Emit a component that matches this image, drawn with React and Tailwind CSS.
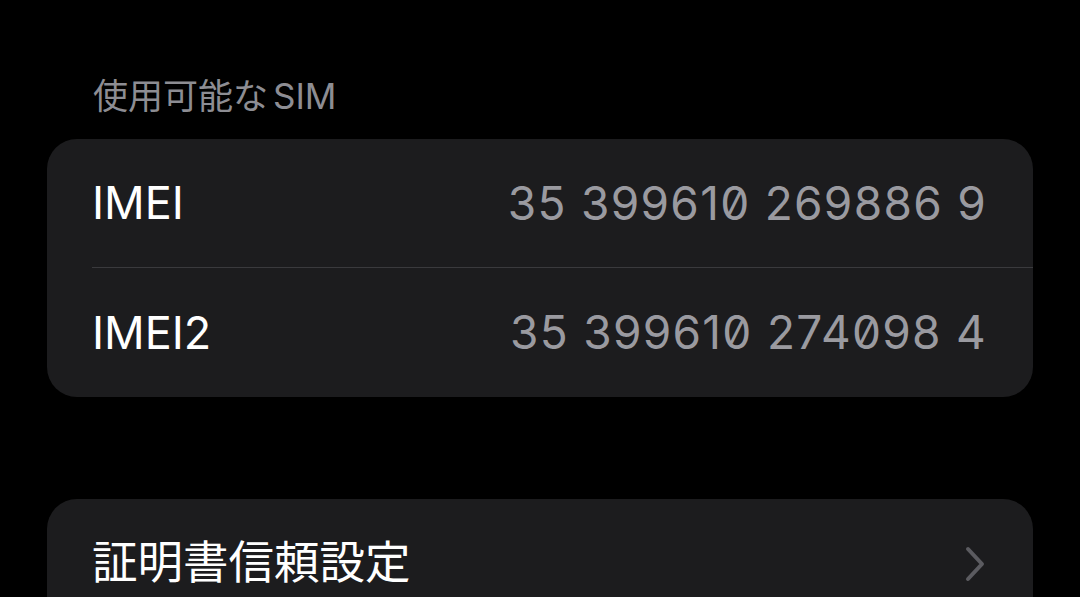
import React from "react";

const font = { fontFamily: '"Inter", "Noto Sans CJK JP", sans-serif' };

const Chevron = () => (
  <svg width="24" height="38" viewBox="0 0 24 38" fill="none">
    <path
      d="M5 4 L19 19 L5 34"
      stroke="#5b5b60"
      strokeWidth="4"
      strokeLinecap="round"
      strokeLinejoin="round"
    />
  </svg>
);

const InfoRow = ({ label, value, last }) => (
  <div className="pl-[45px]">
    <div
      className={`h-[129px] flex items-center justify-between pr-[46px] ${
        last ? "" : "border-b border-[#3a3a3d]"
      }`}
    >
      <span className="text-[45px] text-white">{label}</span>
      <span className="text-[46px] text-[#9a9aa0] slashed-zero tracking-[0.028em]">
        {value}
      </span>
    </div>
  </div>
);

export default function App() {
  return (
    <div
      className="w-[1080px] h-[597px] overflow-hidden bg-black px-[47px] pt-[72px]"
      style={font}
    >
      <div className="pl-[46px] text-[35px] leading-[48px] text-[#8d8d93] mb-[19px]">
        使用可能な<span className="ml-[5px]">SIM</span>
      </div>
      <div className="bg-[#1c1c1e] rounded-[30px] overflow-hidden">
        <InfoRow label="IMEI" value="35 399610 269886 9" />
        <InfoRow label="IMEI2" value="35 399610 274098 4" last />
      </div>
      <div className="mt-[102px] bg-[#1c1c1e] rounded-t-[30px] pl-[45px] pr-[46px] h-[129px] flex items-center justify-between">
        <span className="text-[45.5px] text-white">証明書信頼設定</span>
        <Chevron />
      </div>
    </div>
  );
}
